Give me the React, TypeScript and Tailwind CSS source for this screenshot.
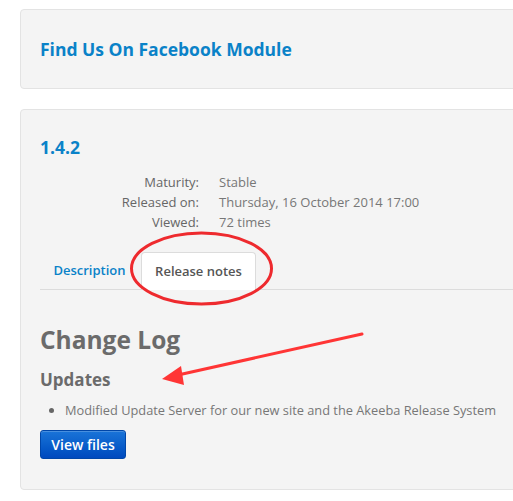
import React from "react";

const meta = [
  ["Maturity:", "Stable"],
  ["Released on:", "Thursday, 16 October 2014 17:00"],
  ["Viewed:", "72 times"],
];

export default function App() {
  return (
    <div
      className="relative h-[501px] w-[513px] overflow-hidden bg-white pl-5 pt-[9px]"
      style={{ fontFamily: '"Open Sans", "Liberation Sans", sans-serif' }}
    >
      <div className="flex w-[560px] flex-col gap-5">
        {/* Title panel */}
        <div className="flex h-[80px] items-center rounded border border-[#e3e3e3] bg-[#f4f4f4] px-[19px]">
          <h2 className="text-[17.5px] font-bold text-[#0a82c8]">Find Us On Facebook Module</h2>
        </div>

        {/* Release panel */}
        <div className="h-[381px] rounded border border-[#e3e3e3] bg-[#f4f4f4] px-[19px] pt-[24px]">
          <h3 className="text-[17.5px] font-bold leading-[26px] text-[#0a82c8]">1.4.2</h3>

          <div className="mt-[12px] flex flex-col text-[13px] leading-[20px] text-[#666]">
            {meta.map(([k, v]) => (
              <div key={k} className="flex gap-5">
                <span className="w-[159px] text-right">{k}</span>
                <span className="text-[#777]">{v}</span>
              </div>
            ))}
          </div>

          {/* Tabs */}
          <div className="mt-[20px] flex gap-[2px] border-b border-[#dcdcdc]">
            <a className="flex h-[37px] w-[99px] items-center justify-center text-[13px] font-semibold text-[#0a82c8]">
              Description
            </a>
            <div className="-mb-px flex h-[38px] w-[115px] items-center justify-center rounded-t border border-b-0 border-[#dcdcdc] bg-white text-[13px] font-semibold text-[#555]">
              Release notes
            </div>
          </div>

          <h1 className="mt-[34px] text-[24.5px] font-bold leading-[32px] text-[#6b6b6b]">Change Log</h1>
          <h4 className="mt-[12px] text-[17px] font-bold leading-[24px] text-[#6b6b6b]">Updates</h4>
          <ul className="mt-[8px] list-disc pl-[25px] text-[12.8px] leading-[20px] text-[#777] marker:text-[#666]">
            <li>Modified Update Server for our new site and the Akeeba Release System</li>
          </ul>
          <button className="mt-[10px] h-[29px] w-[86px] rounded-[3px] border border-[#0046a8] bg-gradient-to-b from-[#1a74d8] to-[#0049be] text-[14px] font-semibold text-white shadow-[inset_0_1px_0_rgba(255,255,255,0.2)]">
            View files
          </button>
        </div>
      </div>

      {/* Annotations */}
      <svg className="pointer-events-none absolute left-0 top-0" width="513" height="501">
        <ellipse cx="201.5" cy="268.5" rx="70" ry="35.5" fill="none" stroke="#ee2a2e" strokeWidth="3" />
        <line x1="362" y1="334" x2="178" y2="375" stroke="#ff3535" strokeWidth="3" strokeLinecap="round" />
        <polygon points="162,379 181,366 184,385" fill="#ff3535" />
      </svg>
    </div>
  );
}
